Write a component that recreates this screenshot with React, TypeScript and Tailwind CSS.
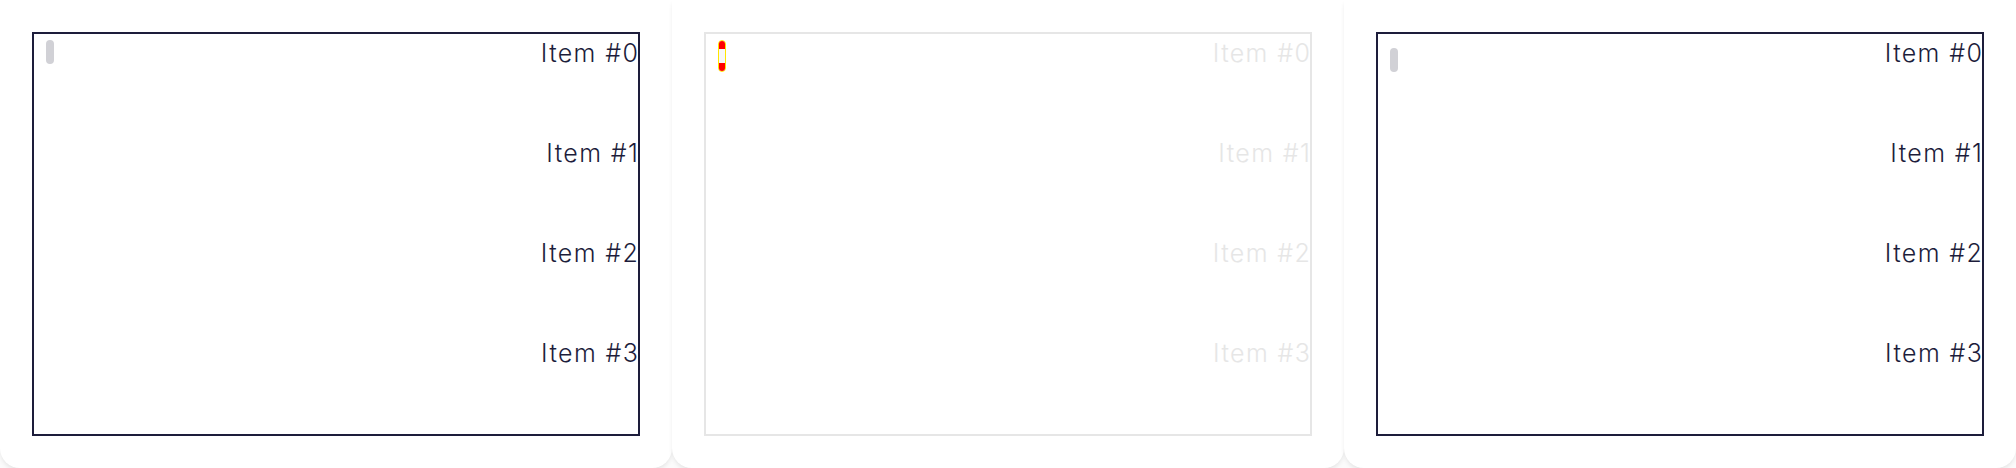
const items = ["Item #0", "Item #1", "Item #2", "Item #3"];

type Variant = "dark" | "muted";

function Thumb({ variant }: { variant: Variant }) {
  if (variant === "muted") {
    return (
      <div className="absolute left-[12px] top-[6px] flex h-8 w-2 flex-col overflow-hidden rounded-full border border-[#ffe600]">
        <div className="h-2 bg-[#ff0000]" />
        <div className="flex-1 bg-[#f7f7f7]" />
        <div className="h-2 bg-[#ff0000]" />
      </div>
    );
  }
  return null;
}

function Panel({ variant, offset }: { variant: Variant; offset: number }) {
  const dark = variant === "dark";
  return (
    <div className="h-[468px] w-[672px] shrink-0 rounded-b-[20px] bg-white p-8 shadow-[0_3px_5px_-1px_rgba(0,0,0,0.10)]">
      <div
        className={
          dark
            ? "relative h-[404px] w-[608px] border-2 border-[#1d1d3b] bg-white"
            : "relative h-[404px] w-[608px] border-2 border-[#e6e6e6] bg-white"
        }
      >
        {dark ? (
          <div
            className="absolute left-[12px] h-6 w-2 rounded-full bg-[#d1d1d6]"
            style={{ top: offset }}
          />
        ) : (
          <Thumb variant={variant} />
        )}
        {items.map((label) => (
          <div
            key={label}
            className={
              dark
                ? "-mr-[1.25px] h-[100px] pt-[3px] text-right text-[25px] font-[350] leading-8 tracking-[0.055em] text-[#1d1d3b]"
                : "-mr-[1.25px] h-[100px] pt-[3px] text-right text-[25px] font-[350] leading-8 tracking-[0.055em] text-[#e6e6e6]"
            }
          >
            {label}
          </div>
        ))}
      </div>
    </div>
  );
}

export default function App() {
  return (
    <div className="h-[468px] w-[2016px] overflow-hidden bg-[#fbfbfb] font-['Inter',sans-serif]">
      <div className="flex">
        <Panel variant="dark" offset={6} />
        <Panel variant="muted" offset={6} />
        <Panel variant="dark" offset={14} />
      </div>
    </div>
  );
}
